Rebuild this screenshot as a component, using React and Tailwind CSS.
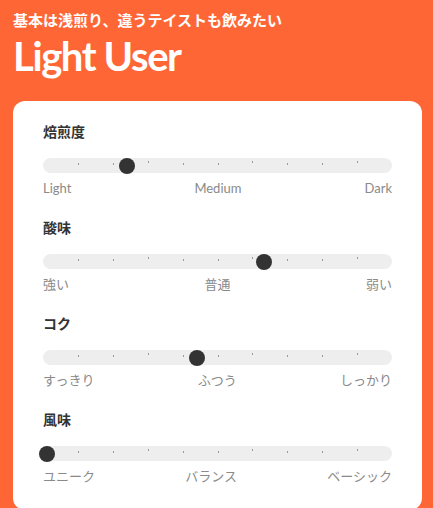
import React from 'react';

const font = { fontFamily: 'Lato, "Noto Sans CJK JP", sans-serif' };

const sliders = [
  { title: '焙煎度', pos: 83.5, labels: ['Light', 'Medium', 'Dark'] },
  { title: '酸味', pos: 220.5, labels: ['強い', '普通', '弱い'] },
  { title: 'コク', pos: 153.5, labels: ['すっきり', 'ふつう', 'しっかり'] },
  { title: '風味', pos: 3.5, labels: ['ユニーク', 'バランス', 'ベーシック'] },
];

const ticks = [1, 2, 3, 4, 5, 6, 7, 8, 9];

const Slider = ({ title, pos, labels }) => (
  <div className="pb-[22px]">
    <h3 className="text-[14px] leading-[20px] font-bold text-[#333]">{title}</h3>
    <div className="relative mt-[16px] h-[15px] rounded-full bg-[#eeeeee]">
      {ticks.map((k) => (
        <span
          key={k}
          className={`absolute w-px h-[2px] bg-[#9a9a9a] ${k % 3 === 0 ? 'top-[3px]' : 'top-[5px]'}`}
          style={{ left: `${k * 10}%` }}
        />
      ))}
      <span
        className="absolute top-[-0.5px] w-[16px] h-[16px] rounded-full bg-[#333333]"
        style={{ left: pos - 8 }}
      />
    </div>
    <div className="mt-[7px] flex justify-between text-[13px] leading-[16px] text-[#8a8a8a]">
      {labels.map((l) => (
        <span key={l}>{l}</span>
      ))}
    </div>
  </div>
);

export default function App() {
  return (
    <div className="w-[433px] h-[508px] overflow-hidden bg-[#ff6636] px-[13px] pt-[10px]" style={font}>
      <p className="text-[15px] leading-[20px] font-bold text-white">基本は浅煎り、違うテイストも飲みたい</p>
      <h1 className="mt-[2px] text-[40px] leading-[48px] font-bold tracking-[-1.4px] text-white">Light User</h1>
      <div className="mt-[21px] w-[409px] rounded-[12px] bg-white px-[30px] pt-[21px] pb-[4px]">
        {sliders.map((s) => (
          <Slider key={s.title} {...s} />
        ))}
      </div>
    </div>
  );
}
